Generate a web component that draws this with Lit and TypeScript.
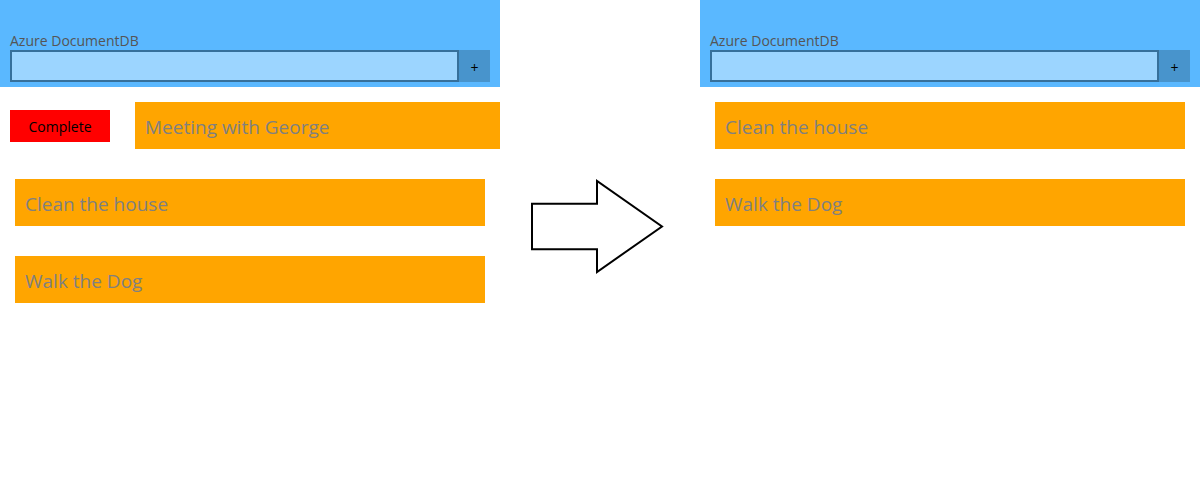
import { LitElement, html, css } from "lit";
import { customElement, property } from "lit/decorators.js";

interface Task {
  title: string;
  swiped?: boolean;
}

@customElement("todo-panel")
class TodoPanel extends LitElement {
  @property({ attribute: false }) tasks: Task[] = [];

  static styles = css`
    :host {
      display: block;
      min-width: 0;
      overflow: hidden;
    }
    .header {
      background: #5ab8ff;
      padding: 31px 10px 5px;
    }
    .title {
      display: block;
      font-size: 14px;
      line-height: 19px;
      color: #555;
    }
    .entry {
      display: flex;
      height: 32px;
    }
    .field {
      flex: 1;
      min-width: 0;
      box-sizing: border-box;
      border: 2px solid #36709b;
      border-radius: 0;
      background: #9cd5ff;
      padding: 0 8px;
      font: inherit;
      outline: none;
    }
    .add {
      width: 31px;
      border: 0;
      padding: 2px 0 0;
      background: #4894cc;
      color: #000;
      font: 14px "Open Sans", sans-serif;
    }
    .list {
      list-style: none;
      margin: 0;
      padding: 15px 0 0;
      display: grid;
      gap: 30px;
    }
    .row {
      display: flex;
      align-items: center;
      padding: 0 15px;
    }
    .row.swiped {
      padding: 0 0 0 10px;
      gap: 25px;
    }
    .complete {
      flex: none;
      width: 100px;
      height: 32px;
      border: 0;
      padding: 2px 0 0;
      background: #f00;
      color: #000;
      font: 14px "Open Sans", sans-serif;
    }
    .task {
      flex: 1;
      min-width: 0;
      background: #ffa500;
      color: #808080;
      font-size: 19px;
      line-height: 27px;
      padding: 12px 10px 8px;
      white-space: nowrap;
    }
  `;

  render() {
    return html`
      <header class="header">
        <label class="title" for="entry">Azure DocumentDB</label>
        <div class="entry">
          <input class="field" id="entry" type="text" />
          <button class="add" type="button">+</button>
        </div>
      </header>
      <ul class="list">
        ${this.tasks.map(
          (task) => html`
            <li class="row ${task.swiped ? "swiped" : ""}">
              ${task.swiped
                ? html`<button class="complete" type="button">Complete</button>`
                : null}
              <div class="task">${task.title}</div>
            </li>
          `
        )}
      </ul>
    `;
  }
}

@customElement("app-root")
class AppRoot extends LitElement {
  static styles = css`
    :host {
      display: grid;
      grid-template-columns: 5fr 2fr 5fr;
      min-height: 100vh;
      background: #fff;
      font-family: "Open Sans", sans-serif;
    }
    .arrow {
      display: flex;
      justify-content: center;
      align-items: flex-start;
      padding: 179px 6px 0 0;
    }
  `;

  private before: Task[] = [
    { title: "Meeting with George", swiped: true },
    { title: "Clean the house" },
    { title: "Walk the Dog" },
  ];

  private after: Task[] = [
    { title: "Clean the house" },
    { title: "Walk the Dog" },
  ];

  render() {
    return html`
      <todo-panel .tasks=${this.before}></todo-panel>
      <div class="arrow">
        <svg width="134" height="96" viewBox="0 0 134 96" aria-hidden="true">
          <path
            d="M2 24.75H67V2L132 47.5L67 93V70.25H2Z"
            fill="#fff"
            stroke="#000"
            stroke-width="2"
          />
        </svg>
      </div>
      <todo-panel .tasks=${this.after}></todo-panel>
    `;
  }
}
